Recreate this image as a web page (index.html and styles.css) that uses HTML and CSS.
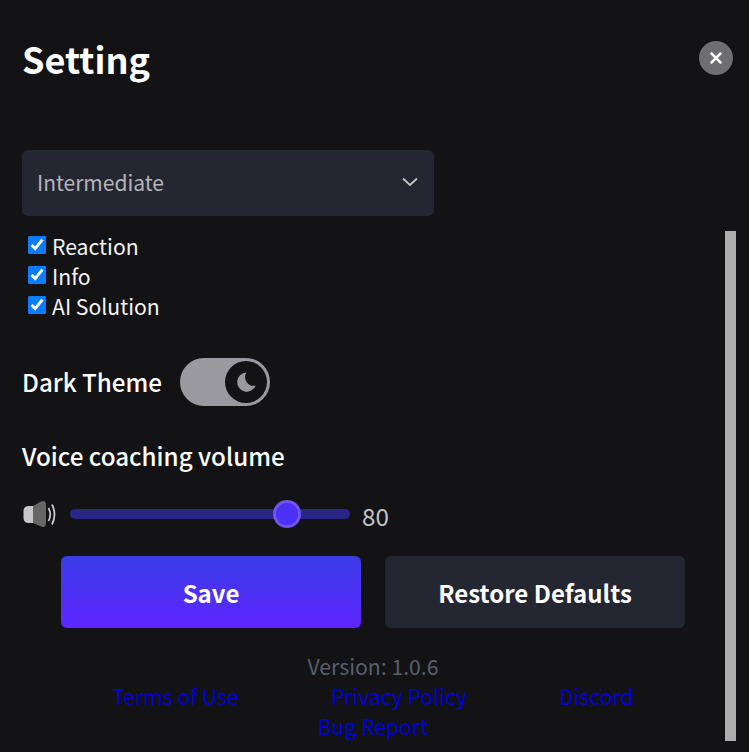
FILE: index.html
```html
<!DOCTYPE html>
<html>
  <head>
    <title>Setting</title>
    <link rel="stylesheet" href="styles.css">
  </head>
  <body>
    <div class="panel">
      <div class="header">
        <h1>Setting</h1>
        <button class="close-btn" aria-label="Close">
          <svg width="12" height="12" viewBox="0 0 12 12">
            <path d="M0.8 0.8 L11.2 11.2 M11.2 0.8 L0.8 11.2" stroke="#fff" stroke-width="2.6" fill="none"/>
          </svg>
        </button>
      </div>

      <div class="select">
        <span>Intermediate</span>
        <svg width="18" height="10" viewBox="0 0 18 10">
          <path d="M2 1.5 L9 8 L16 1.5" stroke="#c4c4c8" stroke-width="1.8" fill="none"/>
        </svg>
      </div>

      <div class="checks">
        <label class="check"><input type="checkbox" checked>Reaction</label>
        <label class="check"><input type="checkbox" checked>Info</label>
        <label class="check"><input type="checkbox" checked>AI Solution</label>
      </div>

      <div class="theme-row">
        <span class="row-title">Dark Theme</span>
        <div class="toggle">
          <div class="knob">
            <svg width="24" height="24" viewBox="0 0 24 24">
              <path d="M12.5 2.5 A9.6 9.6 0 1 0 21.8 15.5 A8.6 8.6 0 0 1 12.5 2.5 Z" fill="#9a999f"/>
            </svg>
          </div>
        </div>
      </div>

      <div class="row-title volume-title">Voice coaching volume</div>
      <div class="volume-row">
        <svg class="speaker" width="36" height="28" viewBox="0 0 36 28">
          <path d="M7 6 H11 V23 H7 Q1.5 23 1.5 18 V11 Q1.5 6 7 6 Z" fill="#c8c8c8"/>
          <path d="M11 6 L19 1.5 Q24 -0.5 24 5 V23 Q24 28.5 19 26.5 L11 23 Z" fill="#666"/>
          <path d="M26.5 8 Q30 14.5 26.5 21" stroke="#c8c8c8" stroke-width="1.8" fill="none"/>
          <path d="M30 4.5 Q35 14.5 30 24.5" stroke="#c8c8c8" stroke-width="1.8" fill="none"/>
        </svg>
        <div class="slider">
          <div class="slider-thumb"></div>
        </div>
        <span class="volume-value">80</span>
      </div>

      <div class="buttons">
        <button class="btn btn-save">Save</button>
        <button class="btn btn-restore">Restore Defaults</button>
      </div>

      <div class="version">Version: 1.0.6</div>
      <div class="links">
        <a href="#">Terms of Use</a>
        <a href="#">Privacy Policy</a>
        <a href="#">Discord</a>
        <a href="#">Bug Report</a>
      </div>
    </div>
    <div class="scrollbar"></div>
  </body>
</html>
```

FILE: styles.css
```css
:root {
  --bg-color: #131316;
  --card-bg: #242632;
  --text-font: "Noto Sans CJK KR", "Noto Sans", sans-serif;
}

html,
body {
  height: 100%;
}

body {
  margin: 0;
  background-color: var(--bg-color);
  color: #fff;
  font-family: var(--text-font);
  overflow: hidden;
}

.panel {
  width: 702px;
  padding-left: 22px;
}

.header {
  display: flex;
  justify-content: space-between;
  align-items: center;
  height: 116px;
  width: 711px;
}

h1 {
  margin: 0;
  font-size: 36px;
  font-weight: 700;
  line-height: 52px;
}

.close-btn {
  display: flex;
  align-items: center;
  justify-content: center;
  width: 34px;
  height: 34px;
  padding: 0;
  border: none;
  border-radius: 50%;
  background: #6e6e70;
}

.select {
  display: flex;
  align-items: center;
  justify-content: space-between;
  box-sizing: border-box;
  width: 412px;
  height: 66px;
  margin-top: 34px;
  padding: 0 15px 2px;
  border-radius: 6px;
  background: var(--card-bg);
  color: #b4b4b8;
  font-size: 21px;
}

.checks {
  margin-top: 15px;
  padding-left: 6px;
}

.check {
  display: flex;
  align-items: center;
  height: 30px;
  font-size: 21.2px;
  line-height: 28px;
  color: #f4f4f4;
}

.check input {
  width: 18px;
  height: 18px;
  margin: 0 6px 3px 0;
  accent-color: #0a7cff;
}

.theme-row {
  display: flex;
  align-items: center;
  gap: 18px;
  margin-top: 37px;
}

.row-title {
  font-size: 24.2px;
  font-weight: 500;
  line-height: 48px;
}

.toggle {
  display: flex;
  justify-content: flex-end;
  align-items: center;
  box-sizing: border-box;
  width: 90px;
  height: 48px;
  padding-right: 3px;
  border-radius: 24px;
  background: #9a999f;
}

.knob {
  display: flex;
  align-items: center;
  justify-content: center;
  width: 42px;
  height: 42px;
  border-radius: 50%;
  background: var(--bg-color);
}

.volume-title {
  margin-top: 26px;
}

.volume-row {
  display: flex;
  align-items: center;
  margin-top: 14px;
  height: 40px;
}

.speaker {
  width: 36px;
  flex: none;
}

.slider {
  position: relative;
  width: 280px;
  height: 10px;
  margin-left: 12px;
  border-radius: 5px;
  background: #282588;
}

.slider-thumb {
  position: absolute;
  left: 203px;
  top: -9px;
  box-sizing: border-box;
  width: 28px;
  height: 28px;
  border: 3px solid #7052f5;
  border-radius: 50%;
  background: #4c30f5;
}

.volume-value {
  margin-left: 12px;
  margin-top: 2px;
  font-size: 24.2px;
  color: #c4c4c4;
}

.buttons {
  display: flex;
  justify-content: center;
  gap: 24px;
  margin-top: 22px;
}

.btn {
  width: 300px;
  height: 72px;
  border: none;
  border-radius: 6px;
  color: #fff;
  font-family: var(--text-font);
  font-size: 24px;
  font-weight: 700;
}

.btn-save {
  background: linear-gradient(180deg, #3b3de8, #5d25ff);
}

.btn-restore {
  background: var(--card-bg);
}

.version {
  margin-top: 23px;
  text-align: center;
  font-size: 21.2px;
  line-height: 30px;
  color: #5b5e6a;
}

.links {
  display: flex;
  flex-wrap: wrap;
  justify-content: center;
  font-size: 21.2px;
  line-height: 30px;
}

.links a {
  margin: 0 46px;
  color: #0000d8;
  text-decoration: none;
}

.scrollbar {
  position: absolute;
  left: 725px;
  top: 231px;
  width: 11px;
  height: 510px;
  background: #adadad;
}
```
